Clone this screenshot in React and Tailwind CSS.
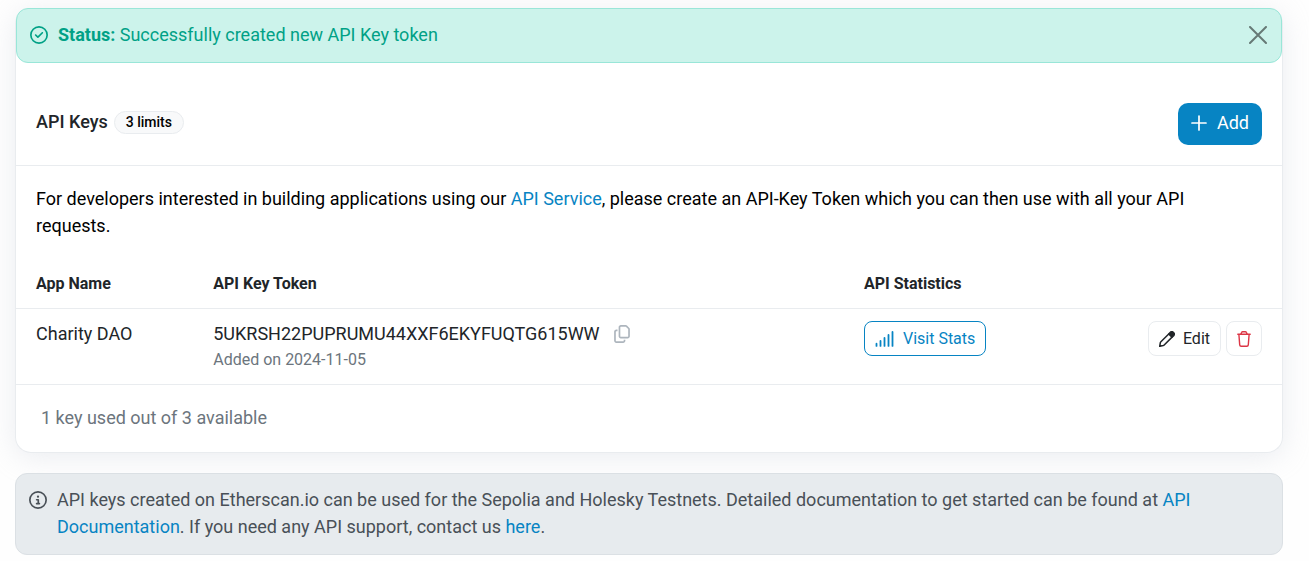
import React, { useState } from "react";

function CheckCircleIcon() {
  return (
    <svg className="size-[18px]" viewBox="0 0 512 512" fill="currentColor" aria-hidden="true">
      <path d="M256 48a208 208 0 1 1 0 416 208 208 0 1 1 0-416zm0 464A256 256 0 1 0 256 0a256 256 0 1 0 0 512zM369 209c9.400-9.400 9.400-24.600 0-33.900s-24.600-9.400-33.900 0l-111 111-47-47c-9.400-9.400-24.600-9.400-33.900 0s-9.400 24.600 0 33.900l64 64c9.400 9.400 24.600 9.400 33.900 0L369 209z" />
    </svg>
  );
}

function InfoCircleIcon() {
  return (
    <svg className="size-[18px]" viewBox="0 0 512 512" fill="currentColor" aria-hidden="true">
      <path d="M256 48a208 208 0 1 1 0 416 208 208 0 1 1 0-416zm0 464A256 256 0 1 0 256 0a256 256 0 1 0 0 512zM216 336c-13.300 0-24 10.700-24 24s10.700 24 24 24h80c13.300 0 24-10.700 24-24s-10.700-24-24-24h-8v-88c0-13.300-10.700-24-24-24h-48c-13.300 0-24 10.700-24 24s10.700 24 24 24h24v64h-24zm40-144a32 32 0 1 0 0-64 32 32 0 1 0 0 64z" />
    </svg>
  );
}

function CloseIcon() {
  return (
    <svg className="size-[18px]" viewBox="0 0 18 18" fill="none" stroke="currentColor" strokeWidth="2" strokeLinecap="round" aria-hidden="true">
      <path d="M1 1l16 16M17 1L1 17" />
    </svg>
  );
}

function PlusIcon() {
  return (
    <svg className="size-4" viewBox="0 0 16 16" fill="none" stroke="currentColor" strokeWidth="1.700" strokeLinecap="round" aria-hidden="true">
      <path d="M8 1v14M1 8h14" />
    </svg>
  );
}

function CopyIcon() {
  return (
    <svg className="h-[18px] w-4" viewBox="0 0 448 512" fill="currentColor" aria-hidden="true">
      <path d="M384 336H192c-8.800 0-16-7.200-16-16V64c0-8.800 7.200-16 16-16h140.100L400 115.900V320c0 8.800-7.200 16-16 16zM192 384h192c35.300 0 64-28.700 64-64V115.900c0-12.700-5.100-24.900-14.100-33.900L366.100 14.100c-9-9-21.200-14.100-33.900-14.100H192c-35.300 0-64 28.700-64 64v256c0 35.300 28.700 64 64 64zM64 128c-35.300 0-64 28.700-64 64v256c0 35.300 28.700 64 64 64h192c35.300 0 64-28.700 64-64v-32h-48v32c0 8.800-7.200 16-16 16H64c-8.800 0-16-7.200-16-16V192c0-8.800 7.200-16 16-16h32v-48H64z" />
    </svg>
  );
}

function SignalIcon() {
  return (
    <svg className="h-4 w-5" viewBox="0 0 20 16" fill="none" stroke="currentColor" strokeWidth="1.800" strokeLinecap="round" aria-hidden="true">
      <path d="M1.500 12.700v2.200M5.500 10v4.900M9.500 7v7.900M13.500 4v10.900M17.500 1v13.900" />
    </svg>
  );
}

function PencilIcon() {
  return (
    <svg className="size-4" viewBox="0 0 16 16" fill="none" stroke="currentColor" strokeWidth="1.500" strokeLinejoin="round" aria-hidden="true">
      <path d="M10 2.700L1.900 10.800c-.300.300-.500.600-.600 1L.700 15.300l3.500-.700c.400-.100.700-.300 1-.600l8.100-8.100" />
      <path fill="currentColor" d="M9.700 3l1.700-1.700a2 2 0 0 1 2.800 0l.500.500a2 2 0 0 1 0 2.800L13 6.300z" />
    </svg>
  );
}

function TrashIcon() {
  return (
    <svg className="h-4 w-3.5" viewBox="0 0 14 16" fill="none" stroke="currentColor" strokeWidth="1.400" strokeLinecap="round" strokeLinejoin="round" aria-hidden="true">
      <path d="M.8 3.300h12.400M3.700 3.200l.9-1.700c.2-.5.600-.7 1.100-.7h2.600c.5 0 .9.200 1.100.7l.9 1.700M1.900 3.500l.8 10.400c.1.800.6 1.300 1.400 1.300h5.800c.8 0 1.300-.5 1.400-1.300l.8-10.400" />
    </svg>
  );
}

function StatusAlert({ onClose }) {
  return (
    <div role="alert" className="flex items-center gap-2.5 rounded-xl border border-[#99e6d8] bg-[#ccf3eb] px-[13px] pt-3 pb-3.5 text-[#00a186]">
      <CheckCircleIcon />
      <p className="grow">
        <strong className="font-bold">Status:</strong> Successfully created new API Key token
      </p>
      <button type="button" aria-label="Close" onClick={onClose} className="cursor-pointer px-px text-black/50">
        <CloseIcon />
      </button>
    </div>
  );
}

function KeysTable() {
  return (
    <table className="mt-[21px] w-full table-fixed text-left">
      <thead className="text-base leading-6">
        <tr className="border-b border-[#e9ecef]">
          <th scope="col" className="w-[14%] py-3 pl-5 font-bold">App Name</th>
          <th scope="col" className="w-[51.4%] py-3 pl-5 font-bold">API Key Token</th>
          <th scope="col" className="py-3 pl-5 font-bold">API Statistics</th>
          <td className="w-[16%]" />
        </tr>
      </thead>
      <tbody>
        <tr className="border-b border-[#e9ecef] align-top">
          <td className="pt-[11px] pb-3 pl-5">Charity DAO</td>
          <td className="pt-[11px] pb-3 pl-5">
            <div className="flex items-center gap-3.5">
              <span>5UKRSH22PUPRUMU44XXF6EKYFUQTG615WW</span>
              <button type="button" aria-label="Copy API key" className="cursor-pointer text-[#adb5bd]">
                <CopyIcon />
              </button>
            </div>
            <div className="pt-px text-base leading-6 text-[#6c757d]">Added on 2024-11-05</div>
          </td>
          <td className="py-3 pl-5 text-base">
            <a href="#stats" className="flex h-[35px] w-fit items-center gap-2 rounded-lg border border-[#0784c3] px-2.5 text-[#0784c3]">
              <SignalIcon />
              Visit Stats
            </a>
          </td>
          <td className="py-3 pr-5 text-base">
            <div className="flex justify-end gap-[5px]">
              <button type="button" className="flex h-[35px] cursor-pointer items-center gap-2 rounded-lg border border-[#e9ecef] px-2.5">
                <PencilIcon />
                Edit
              </button>
              <button type="button" aria-label="Delete" className="flex h-[35px] cursor-pointer items-center rounded-lg border border-[#e9ecef] px-2.5 text-[#dc3545]">
                <TrashIcon />
              </button>
            </div>
          </td>
        </tr>
      </tbody>
    </table>
  );
}

export default function App() {
  const [showStatus, setShowStatus] = useState(true);
  return (
    <main className="min-h-screen overflow-hidden bg-[#fefefe] pt-2 pr-[26px] pb-1.5 pl-[15px] font-[Roboto,sans-serif] text-lg leading-[27px] text-[#212529]">
      <section className="rounded-2xl border border-t-0 border-[#e9ecef] bg-white shadow-[0_4px_28px_rgba(189,197,209,0.3)]">
        {showStatus && <StatusAlert onClose={() => setShowStatus(false)} />}
        <header className="flex items-start justify-between border-b border-[#e9ecef] px-5 pt-10 pb-5">
          <div className="flex items-center gap-1.5 pt-[5px]">
            <h1 className="pb-0.5 font-medium">API Keys</h1>
            <span className="rounded-full border border-[#e9ecef] bg-[#f8f9fa] px-[11px] text-sm leading-[21px] font-medium text-black">3 limits</span>
          </div>
          <button type="button" className="flex h-[42px] cursor-pointer items-center gap-2.5 rounded-[10px] bg-[#0784c3] px-[13px] pb-[3px] text-white">
            <PlusIcon />
            Add
          </button>
        </header>
        <p className="px-5 pt-[19px] text-black">
          For developers interested in building applications using our{" "}
          <a href="#api-service" className="text-[#0784c3]">API Service</a>, please create an API-Key Token which you can
          then use with all your API requests.
        </p>
        <KeysTable />
        <p className="px-[25px] pt-[19px] pb-[21px] text-[#6c757d]">1 key used out of 3 available</p>
      </section>
      <aside className="mt-5 flex items-start gap-2.5 rounded-xl border border-[#dbe0e4] bg-[#e7ebee] px-[13px] pt-3 pb-3.5 text-[#495057]">
        <span className="flex h-[27px] items-center">
          <InfoCircleIcon />
        </span>
        <p>
          API keys created on Etherscan.io can be used for the Sepolia and Holesky Testnets. Detailed documentation to get
          started can be found at <a href="#docs" className="text-[#0784c3]">API Documentation</a>. If you need any API
          support, contact us <a href="#support" className="text-[#0784c3]">here</a>.
        </p>
      </aside>
    </main>
  );
}
